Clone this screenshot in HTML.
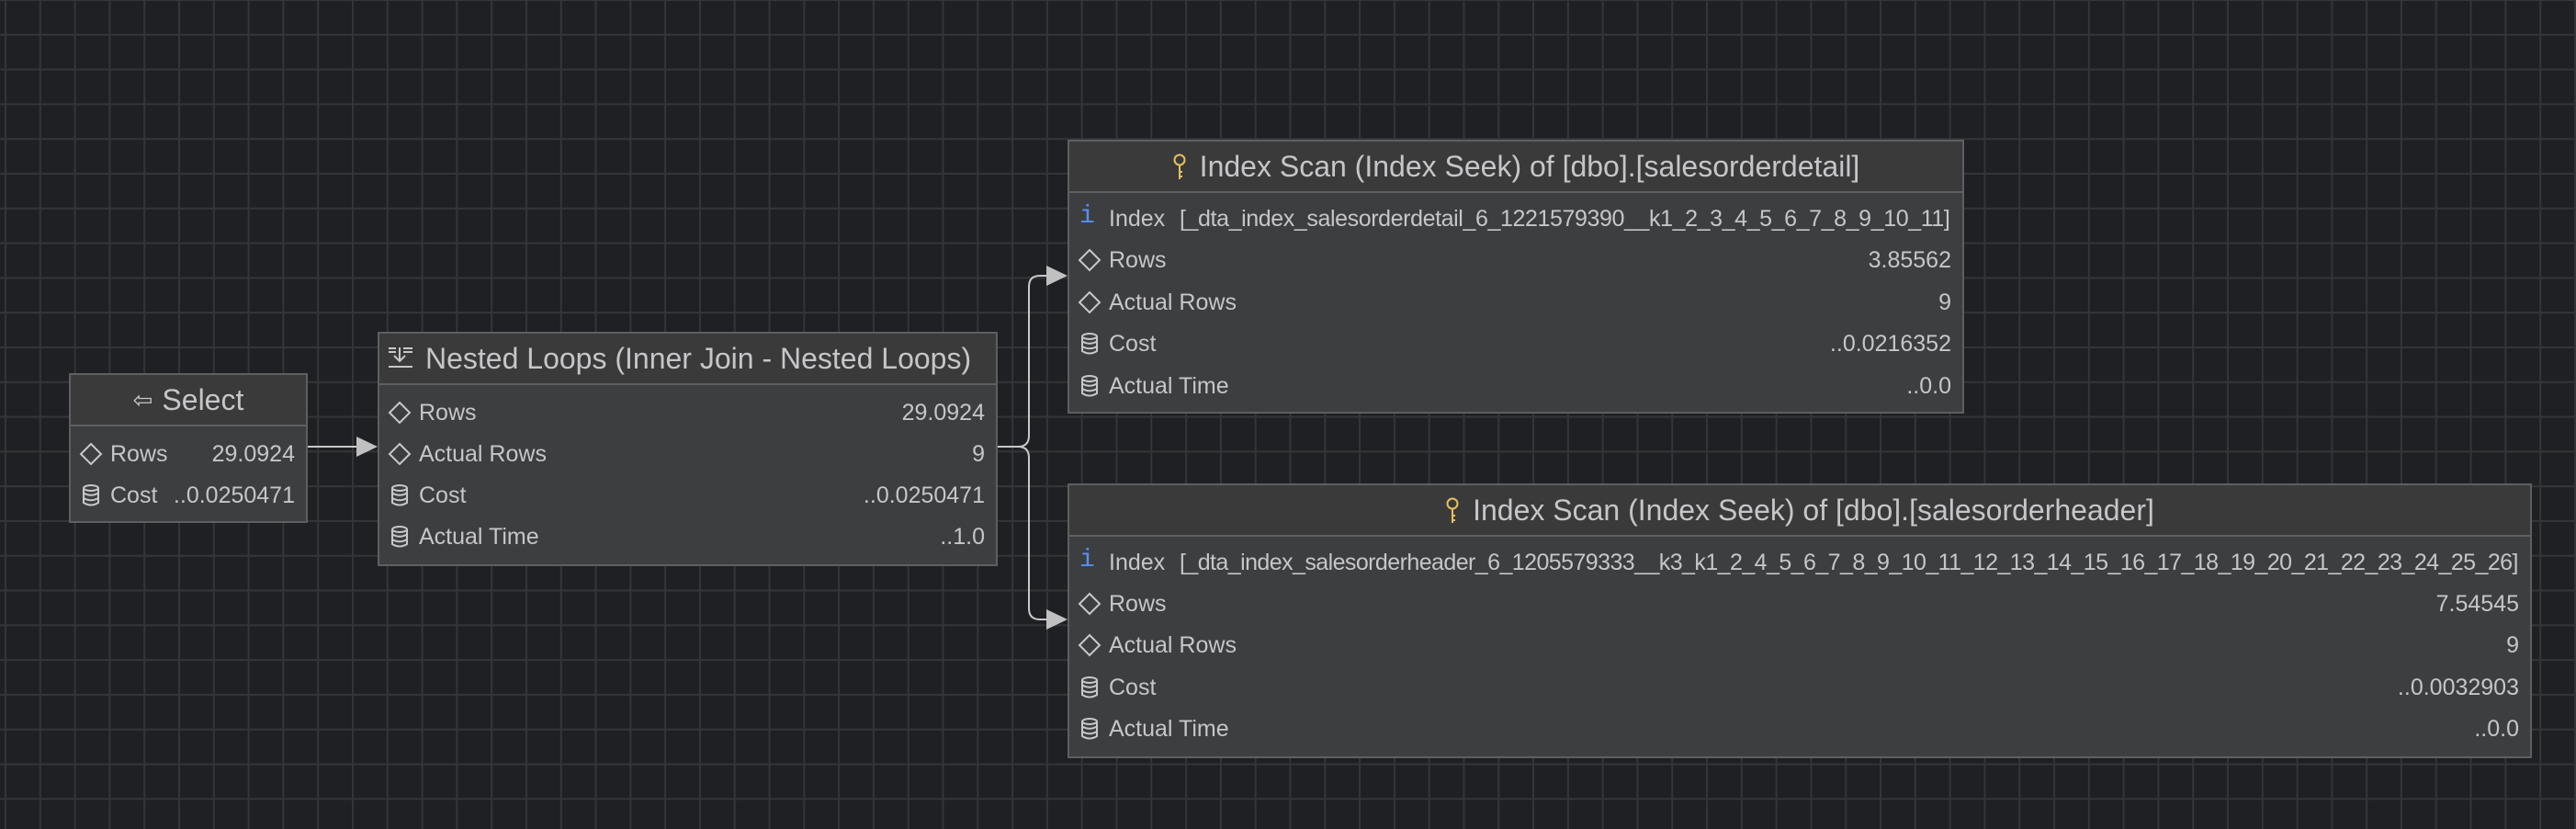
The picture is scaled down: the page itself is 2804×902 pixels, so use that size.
<!DOCTYPE html>
<html><head><meta charset="utf-8"><style>
html,body{margin:0;padding:0}
body{width:2804px;height:902px;overflow:hidden;background-color:#1f2023;
background-image:linear-gradient(to right,#333538 2px,transparent 2px),linear-gradient(to bottom,#333538 2px,transparent 2px);
background-size:37.8px 37.8px;background-position:5px -1px;
font-family:"Liberation Sans",sans-serif;color:#c6c6c9;position:relative}
.box{position:absolute;background:#3d3e40;border:2px solid #5e5f61;box-sizing:border-box}
.hd{position:absolute;left:0;right:0;top:0;background:#3a3a3b;border-bottom:2px solid #5e5f61;box-sizing:border-box;text-align:center;font-size:32px;white-space:nowrap}
.hd span{display:inline-block;vertical-align:middle}
.row{position:absolute;left:0;right:0;height:45px;font-size:25px;white-space:nowrap}
.row .ic{position:absolute;left:9px;top:9px;width:26px;height:26px}
.row .lb{position:absolute;left:43px;top:8px}
.row .v{position:absolute;right:12px;top:8px}
svg{display:block}
</style></head><body>

<svg width="2804" height="902" style="position:absolute;left:0;top:0">
 <g stroke="#c8c8c8" stroke-width="2" fill="none">
  <line x1="334" y1="486" x2="390" y2="486"/>
  <path d="M1085 486 H1108 Q1120 486 1120 474 V312 Q1120 300 1132 300 H1142"/>
  <path d="M1108 486 Q1120 486 1120 498 V662 Q1120 674 1132 674 H1142"/>
 </g>
 <g fill="#c0c0c0">
  <polygon points="388,475 411,486 388,497"/>
  <polygon points="1139,289 1162,300 1139,311"/>
  <polygon points="1139,663 1162,674 1139,685"/>
 </g>
</svg>

<!-- Select -->
<div class="box" style="left:75px;top:406px;width:260px;height:163px">
 <div class="hd" style="height:56px;line-height:51px"><span style="font-size:26px;margin-right:10px">⇦</span><span>Select</span></div>
 <div class="row" style="top:64px"><svg class="ic" viewBox="0 0 26 26"><path d="M13 2 L24 13 L13 24 L2 13 Z" fill="none" stroke="#c8c8c8" stroke-width="2"/></svg><span class="lb">Rows</span><span class="v">29.0924</span></div>
 <div class="row" style="top:109px"><svg class="ic" viewBox="0 0 26 26"><g fill="none" stroke="#c8c8c8" stroke-width="2"><ellipse cx="13" cy="5" rx="8" ry="3"/><path d="M5 5 V21 Q13 26 21 21 V5 M5 10.5 Q13 15 21 10.5 M5 16 Q13 20.5 21 16"/></g></svg><span class="lb">Cost</span><span class="v">..0.0250471</span></div>
</div>

<!-- Nested Loops -->
<div class="box" style="left:411px;top:361px;width:675px;height:255px">
 <div class="hd" style="height:56px;line-height:51px;text-align:left;padding-left:50px"><svg style="position:absolute;left:9px;top:14px" width="28" height="24" viewBox="0 0 28 24"><g stroke="#c8c8c8" stroke-width="2" fill="none"><path d="M1 2 H9 M1 6 H9 M17 2 H27 M17 6 H27 M13 1 V15 M7 10 L13 16 L19 10 M1 22 H27"/></g></svg><span>Nested Loops (Inner Join - Nested Loops)</span></div>
 <div class="row" style="top:64px"><svg class="ic" viewBox="0 0 26 26"><path d="M13 2 L24 13 L13 24 L2 13 Z" fill="none" stroke="#c8c8c8" stroke-width="2"/></svg><span class="lb">Rows</span><span class="v">29.0924</span></div>
 <div class="row" style="top:109px"><svg class="ic" viewBox="0 0 26 26"><path d="M13 2 L24 13 L13 24 L2 13 Z" fill="none" stroke="#c8c8c8" stroke-width="2"/></svg><span class="lb">Actual Rows</span><span class="v">9</span></div>
 <div class="row" style="top:154px"><svg class="ic" viewBox="0 0 26 26"><g fill="none" stroke="#c8c8c8" stroke-width="2"><ellipse cx="13" cy="5" rx="8" ry="3"/><path d="M5 5 V21 Q13 26 21 21 V5 M5 10.5 Q13 15 21 10.5 M5 16 Q13 20.5 21 16"/></g></svg><span class="lb">Cost</span><span class="v">..0.0250471</span></div>
 <div class="row" style="top:199px"><svg class="ic" viewBox="0 0 26 26"><g fill="none" stroke="#c8c8c8" stroke-width="2"><ellipse cx="13" cy="5" rx="8" ry="3"/><path d="M5 5 V21 Q13 26 21 21 V5 M5 10.5 Q13 15 21 10.5 M5 16 Q13 20.5 21 16"/></g></svg><span class="lb">Actual Time</span><span class="v">..1.0</span></div>
</div>

<!-- Detail -->
<div class="box" style="left:1162px;top:152px;width:976px;height:298px">
 <div class="hd" style="height:56px;line-height:51px"><svg style="display:inline-block;vertical-align:middle;margin-right:14px" width="16" height="30" viewBox="0 0 16 30"><g fill="none" stroke="#e6c15c" stroke-width="2"><circle cx="8" cy="7" r="5.5"/><path d="M8 12.5 V28 M8 20 H11 M8 25 H11"/></g></svg><span>Index Scan (Index Seek) of [dbo].[salesorderdetail]</span></div>
 <div class="row" style="top:62px"><span class="ic" style="color:#5b8def;font-family:'Liberation Mono',monospace;font-size:28px;top:4px;left:11px">i</span><span class="lb">Index</span><span class="lb" style="left:120px;letter-spacing:-0.4px">[_dta_index_salesorderdetail_6_1221579390__k1_2_3_4_5_6_7_8_9_10_11]</span></div>
 <div class="row" style="top:107px"><svg class="ic" viewBox="0 0 26 26"><path d="M13 2 L24 13 L13 24 L2 13 Z" fill="none" stroke="#c8c8c8" stroke-width="2"/></svg><span class="lb">Rows</span><span class="v">3.85562</span></div>
 <div class="row" style="top:153px"><svg class="ic" viewBox="0 0 26 26"><path d="M13 2 L24 13 L13 24 L2 13 Z" fill="none" stroke="#c8c8c8" stroke-width="2"/></svg><span class="lb">Actual Rows</span><span class="v">9</span></div>
 <div class="row" style="top:198px"><svg class="ic" viewBox="0 0 26 26"><g fill="none" stroke="#c8c8c8" stroke-width="2"><ellipse cx="13" cy="5" rx="8" ry="3"/><path d="M5 5 V21 Q13 26 21 21 V5 M5 10.5 Q13 15 21 10.5 M5 16 Q13 20.5 21 16"/></g></svg><span class="lb">Cost</span><span class="v">..0.0216352</span></div>
 <div class="row" style="top:244px"><svg class="ic" viewBox="0 0 26 26"><g fill="none" stroke="#c8c8c8" stroke-width="2"><ellipse cx="13" cy="5" rx="8" ry="3"/><path d="M5 5 V21 Q13 26 21 21 V5 M5 10.5 Q13 15 21 10.5 M5 16 Q13 20.5 21 16"/></g></svg><span class="lb">Actual Time</span><span class="v">..0.0</span></div>
</div>

<!-- Header -->
<div class="box" style="left:1162px;top:526px;width:1594px;height:299px">
 <div class="hd" style="height:56px;line-height:51px"><svg style="display:inline-block;vertical-align:middle;margin-right:14px" width="16" height="30" viewBox="0 0 16 30"><g fill="none" stroke="#e6c15c" stroke-width="2"><circle cx="8" cy="7" r="5.5"/><path d="M8 12.5 V28 M8 20 H11 M8 25 H11"/></g></svg><span>Index Scan (Index Seek) of [dbo].[salesorderheader]</span></div>
 <div class="row" style="top:62px"><span class="ic" style="color:#5b8def;font-family:'Liberation Mono',monospace;font-size:28px;top:4px;left:11px">i</span><span class="lb">Index</span><span class="lb" style="left:120px;letter-spacing:-0.57px">[_dta_index_salesorderheader_6_1205579333__k3_k1_2_4_5_6_7_8_9_10_11_12_13_14_15_16_17_18_19_20_21_22_23_24_25_26]</span></div>
 <div class="row" style="top:107px"><svg class="ic" viewBox="0 0 26 26"><path d="M13 2 L24 13 L13 24 L2 13 Z" fill="none" stroke="#c8c8c8" stroke-width="2"/></svg><span class="lb">Rows</span><span class="v">7.54545</span></div>
 <div class="row" style="top:152px"><svg class="ic" viewBox="0 0 26 26"><path d="M13 2 L24 13 L13 24 L2 13 Z" fill="none" stroke="#c8c8c8" stroke-width="2"/></svg><span class="lb">Actual Rows</span><span class="v">9</span></div>
 <div class="row" style="top:198px"><svg class="ic" viewBox="0 0 26 26"><g fill="none" stroke="#c8c8c8" stroke-width="2"><ellipse cx="13" cy="5" rx="8" ry="3"/><path d="M5 5 V21 Q13 26 21 21 V5 M5 10.5 Q13 15 21 10.5 M5 16 Q13 20.5 21 16"/></g></svg><span class="lb">Cost</span><span class="v">..0.0032903</span></div>
 <div class="row" style="top:243px"><svg class="ic" viewBox="0 0 26 26"><g fill="none" stroke="#c8c8c8" stroke-width="2"><ellipse cx="13" cy="5" rx="8" ry="3"/><path d="M5 5 V21 Q13 26 21 21 V5 M5 10.5 Q13 15 21 10.5 M5 16 Q13 20.5 21 16"/></g></svg><span class="lb">Actual Time</span><span class="v">..0.0</span></div>
</div>

</body></html>
